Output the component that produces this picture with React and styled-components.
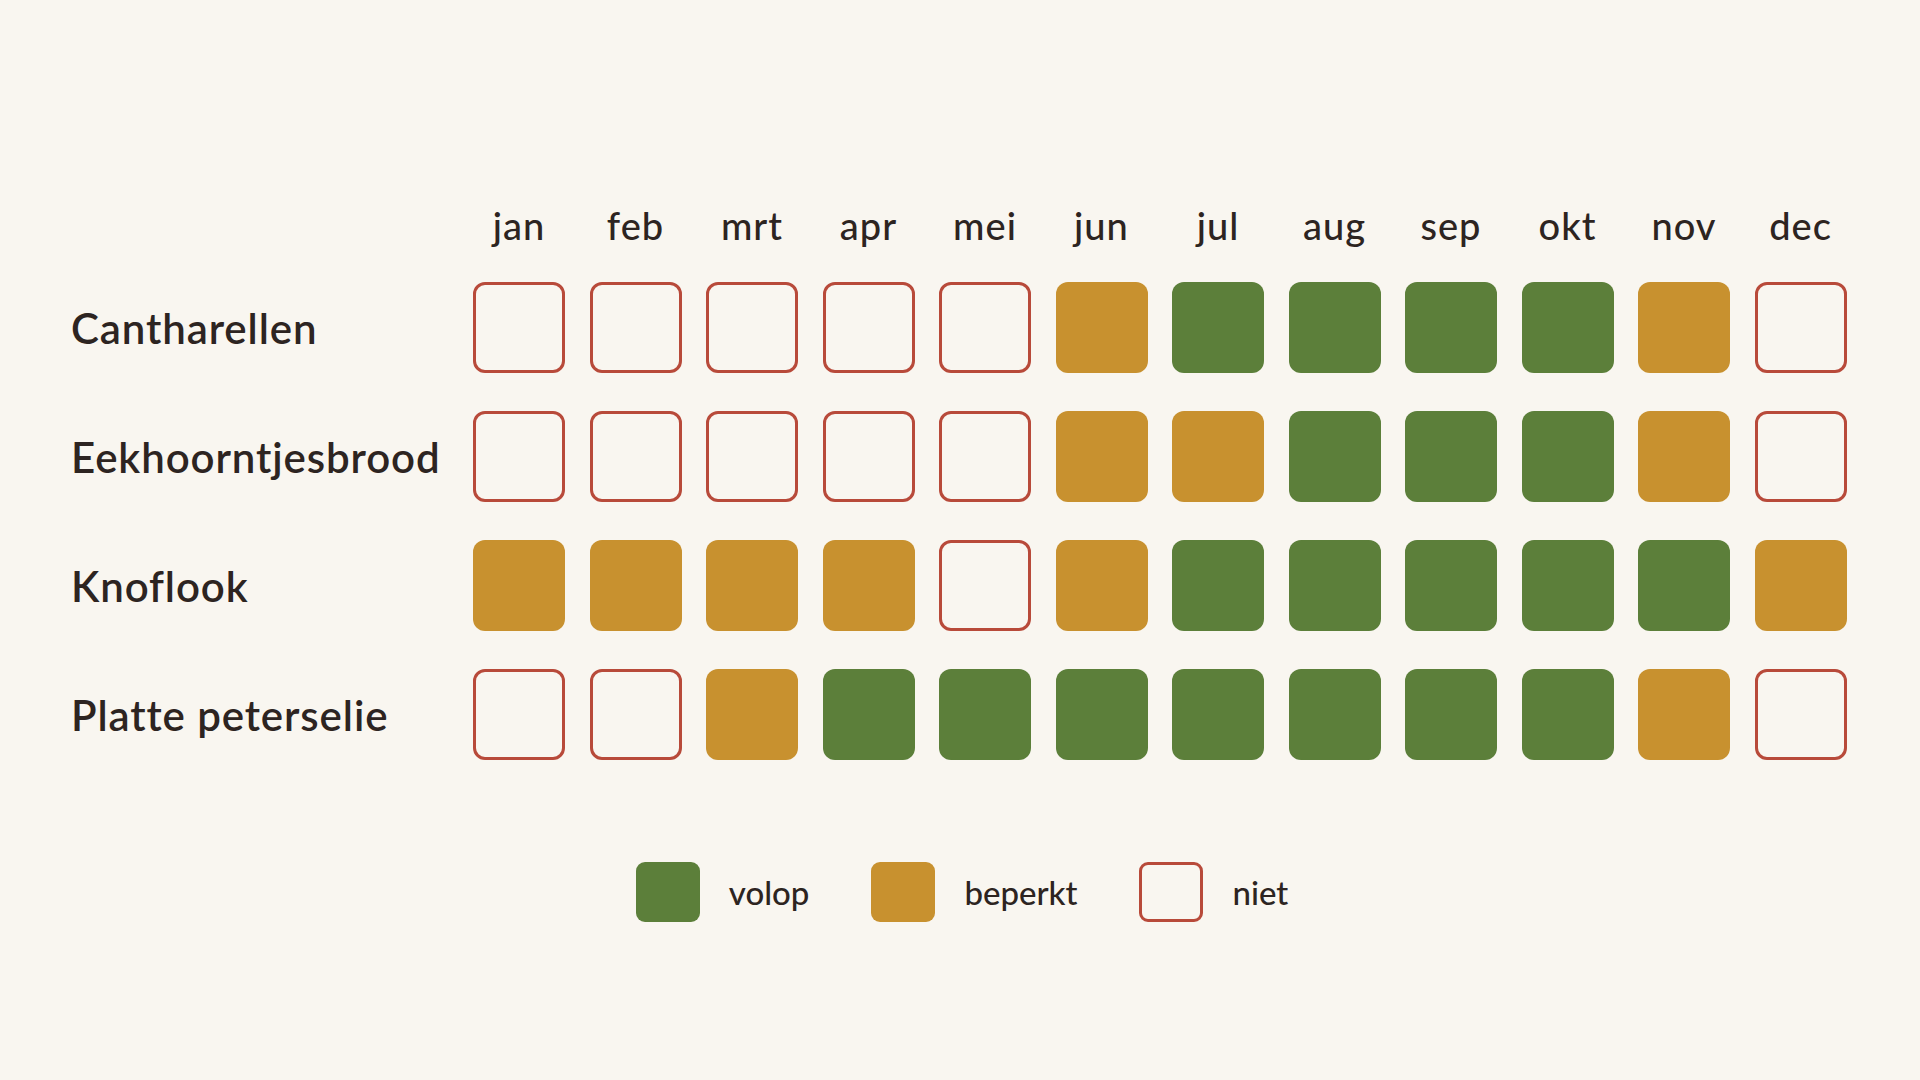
import React from 'react'
import styled, { createGlobalStyle } from 'styled-components'

const GlobalStyle = createGlobalStyle`
  body {
    margin: 0;
    background: #f9f6f0;
    color: #2d2421;
    font-family: Lato, "Liberation Sans", sans-serif;
  }
`

const Page = styled.div`
  width: 1920px;
  height: 1080px;
  box-sizing: border-box;
  padding: 203px 0 0 71px;
  display: flex;
  flex-direction: column;
`

const Grid = styled.div`
  display: grid;
  grid-template-columns: 377.5px repeat(12, 92px);
  column-gap: 24.5px;
  row-gap: 38px;
  align-items: center;
`

const Header = styled(Grid)`
  margin-bottom: 35px;
`

const Month = styled.div`
  font-size: 38px;
  font-weight: 500;
  line-height: 44px;
  text-align: center;
  letter-spacing: 1px;
`

const Label = styled.div`
  font-size: 42px;
  font-weight: 600;
  letter-spacing: 0.9px;
  white-space: nowrap;
`

const colors = {
  volop: '#5c7f3a',
  beperkt: '#c8912f',
}

const Cell = styled.div`
  box-sizing: border-box;
  width: ${p => p.$w || 92}px;
  height: ${p => p.$h || 91}px;
  border-radius: ${p => p.$r || 12}px;
  background: ${p => colors[p.$kind] || 'transparent'};
  border: ${p => (p.$kind === 'niet' ? '3px solid #b84a3a' : 'none')};
`

const Legend = styled.div`
  margin-top: 102px;
  margin-left: -67px;
  display: flex;
  justify-content: center;
  align-items: center;
  gap: 62px;
`

const LegendItem = styled.div`
  display: flex;
  align-items: center;
  gap: 29px;
`

const LegendText = styled.span`
  font-size: 33px;
  font-weight: 500;
`

const months = ['jan', 'feb', 'mrt', 'apr', 'mei', 'jun', 'jul', 'aug', 'sep', 'okt', 'nov', 'dec']

const n = 'niet', b = 'beperkt', v = 'volop'

const rows = [
  { name: 'Cantharellen', data: [n, n, n, n, n, b, v, v, v, v, b, n] },
  { name: 'Eekhoorntjesbrood', data: [n, n, n, n, n, b, b, v, v, v, b, n] },
  { name: 'Knoflook', data: [b, b, b, b, n, b, v, v, v, v, v, b] },
  { name: 'Platte peterselie', data: [n, n, b, v, v, v, v, v, v, v, b, n] },
]

export default function App() {
  return (
    <>
      <GlobalStyle />
      <Page>
        <Header>
          <div />
          {months.map(m => <Month key={m}>{m}</Month>)}
        </Header>
        <Grid>
          {rows.map(r => (
            <React.Fragment key={r.name}>
              <Label>{r.name}</Label>
              {r.data.map((k, i) => <Cell key={i} $kind={k} />)}
            </React.Fragment>
          ))}
        </Grid>
        <Legend>
          <LegendItem>
            <Cell $kind="volop" $w={64} $h={60} $r={9} />
            <LegendText>volop</LegendText>
          </LegendItem>
          <LegendItem>
            <Cell $kind="beperkt" $w={64} $h={60} $r={9} />
            <LegendText>beperkt</LegendText>
          </LegendItem>
          <LegendItem>
            <Cell $kind="niet" $w={64} $h={60} $r={9} />
            <LegendText>niet</LegendText>
          </LegendItem>
        </Legend>
      </Page>
    </>
  )
}
